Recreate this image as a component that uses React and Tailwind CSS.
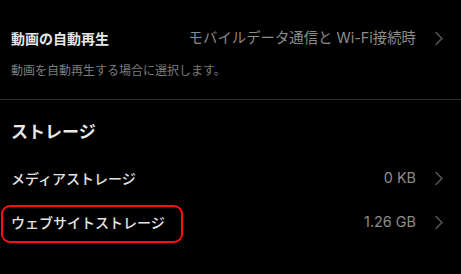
import React from 'react'

const font = { fontFamily: '"Noto Sans CJK JP", "Noto Sans", sans-serif' }
const valueFont = { fontFamily: 'Inter, "Noto Sans CJK JP", sans-serif' }

function Chevron() {
  return (
    <svg width="10" height="15" viewBox="0 0 10 15" className="shrink-0 ml-[18px]">
      <path d="M2 1.5 L8 7.5 L2 13.5" fill="none" stroke="#5a5a5a" strokeWidth="1.4" strokeLinecap="round" strokeLinejoin="round" />
    </svg>
  )
}

function Row({ label, value, highlight }) {
  return (
    <div className="relative flex items-center h-5 pl-[11px] pr-[17px]">
      {highlight && (
        <div className="absolute left-[1px] top-[-7px] w-[182px] h-[38px] border-[2.5px] border-[#ff0f0f] rounded-[9px]" />
      )}
      <span className="text-[14px] font-medium text-[#e4e4e4] leading-5">{label}</span>
      <span className="ml-auto text-[14.4px] text-[#8c8c8c] leading-5" style={valueFont}>{value}</span>
      <Chevron />
    </div>
  )
}

export default function App() {
  return (
    <div className="w-[461px] h-[274px] bg-black overflow-hidden" style={font}>
      <div className="pt-[28px] pb-[21px]">
        <div className="flex items-center h-5 pl-[11px] pr-[17px]">
          <span className="text-[14px] font-bold text-[#e6e6e6] leading-5">動画の自動再生</span>
          <span className="ml-auto text-[14.4px] text-[#8c8c8c] leading-5" style={valueFont}>モバイルデータ通信と Wi-Fi接続時</span>
          <Chevron />
        </div>
        <p className="mt-[14px] pl-[11px] text-[12px] leading-4 text-[#7c7c7c]">動画を自動再生する場合に選択します。</p>
      </div>
      <div className="h-px bg-[#2c2c2c]" />
      <h2 className="mt-[19px] pl-[11px] text-[17px] font-bold leading-6 text-[#e8e8e8]">ストレージ</h2>
      <div className="mt-[25px]">
        <Row label="メディアストレージ" value="0 KB" />
      </div>
      <div className="mt-[24px]">
        <Row label="ウェブサイトストレージ" value="1.26 GB" highlight />
      </div>
    </div>
  )
}
